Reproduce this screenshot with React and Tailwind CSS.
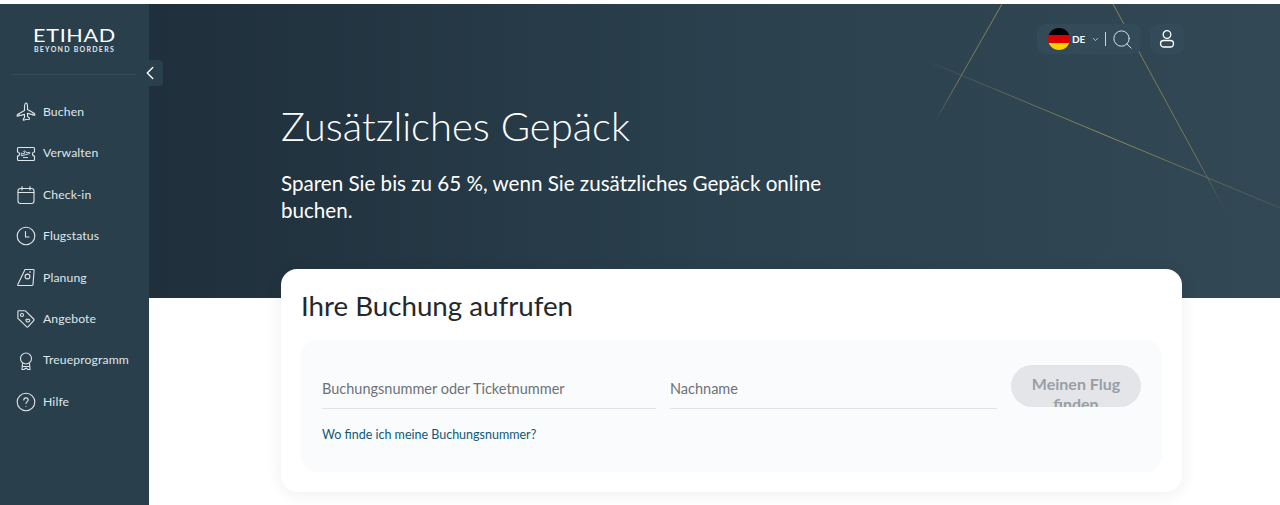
import { ChevronDown, ChevronLeft, Search } from 'lucide-react'

const font = { fontFamily: 'Lato, "Noto Sans", sans-serif' }

const PlaneIcon = () => (
  <svg width="20" height="20" viewBox="0 0 20 20" fill="none" stroke="currentColor" strokeWidth="1.1" strokeLinejoin="round">
    <path d="M10 1c1 0 1.500 2 1.500 3.500v3l6.600 3.700c.5.300.7.700.7 1.100v1l-7.300-1.900v3l1.900 1.600v1.300L10 17.500l-2.700.8V17l1.200-1.600v-3l-7.300 1.900v-1c0-.4.2-.8.700-1.100l6.600-3.700v-3C8.500 3 9 1 10 1z" />
    <path d="M3 11.500v2M17 11.500v2" />
  </svg>
)

const TicketIcon = () => (
  <svg width="20" height="20" viewBox="0 0 20 20" fill="none" stroke="currentColor" strokeWidth="1.1" strokeLinejoin="round">
    <path d="M2.500 3.500h15c.6 0 1 .4 1 1V8a2 2 0 0 0 0 4v3.500c0 .6-.4 1-1 1h-15c-.6 0-1-.4-1-1V12a2 2 0 0 0 0-4V4.500c0-.6.4-1 1-1z" />
    <path d="M5.500 11.800l8-2.200c1-.3.800-1.300-.2-1.200l-2.300.4L8.500 6.900l-.8.3 1.100 2-2 .6-1-.7-.6.2zM7 13.500h5" strokeWidth="0.9" />
  </svg>
)

const CalendarIcon = () => (
  <svg width="20" height="20" viewBox="0 0 20 20" fill="none" stroke="currentColor" strokeWidth="1.1" strokeLinecap="round">
    <rect x="2" y="3.500" width="16" height="15" rx="2.500" />
    <path d="M2 7.500h16M6 1.500v3.500M14 1.500v3.500" />
  </svg>
)

const ClockIcon = () => (
  <svg width="20" height="20" viewBox="0 0 20 20" fill="none" stroke="currentColor" strokeWidth="1.1" strokeLinecap="round" strokeLinejoin="round">
    <circle cx="10" cy="10" r="8.800" />
    <path d="M9.500 5.500V11h3.500" />
  </svg>
)

const TagIcon = () => (
  <svg width="20" height="20" viewBox="0 0 20 20" fill="none" stroke="currentColor" strokeWidth="1.1" strokeLinejoin="round">
    <path d="M9 1.500h8.300c.5 0 .8.300.8.800l-1.100 14.300c0 .5-.4.900-.9.900H2.300c-.5 0-.8-.5-.5-1z" />
    <circle cx="11.500" cy="8.500" r="2.400" />
    <path d="M13 4h2" />
  </svg>
)

const OfferIcon = () => (
  <svg width="20" height="20" viewBox="0 0 20 20" fill="none" stroke="currentColor" strokeWidth="1.1" strokeLinejoin="round">
    <path d="M2.500 1.800h6.200c.4 0 .7.100 1 .4l8 7.800c.5.500.5 1.200 0 1.700l-5.500 6c-.5.500-1.200.5-1.700 0l-8-7.800c-.3-.3-.6-.6-.6-1V2.700c0-.5.200-.9.600-.9z" />
    <circle cx="6" cy="6" r="1.500" />
    <path d="M11 13c-1.300-1-1.400-2.200-.6-2.700.5-.3 1.100-.1 1.400.4.300-.5 1-.7 1.500-.3.700.5.600 1.700-.6 2.500z" />
  </svg>
)

const AwardIcon = () => (
  <svg width="20" height="20" viewBox="0 0 20 20" fill="none" stroke="currentColor" strokeWidth="1.1" strokeLinecap="round" strokeLinejoin="round">
    <circle cx="10" cy="7.500" r="5.500" />
    <path d="M6.500 12.500l-.5 6h2l2-1.500 2 1.500h2l-.5-6M6.200 15.500h7.600" />
  </svg>
)

const HelpIcon = () => (
  <svg width="20" height="20" viewBox="0 0 20 20" fill="none" stroke="currentColor" strokeWidth="1.1" strokeLinecap="round">
    <circle cx="10" cy="10" r="8.800" />
    <path d="M7.800 8c0-1.300 1-2.100 2.200-2.100s2.200.8 2.200 2c0 1.700-2.200 1.800-2.200 3.600M10 14.200v.1" />
  </svg>
)

const UserIcon = () => (
  <svg width="18" height="20" viewBox="0 0 18 20" fill="none" stroke="currentColor" strokeWidth="1.300">
    <circle cx="9" cy="5.500" r="3.800" />
    <path d="M5.500 11.500h7c2 0 3 1.400 3 3s-1 3.500-3 3.500h-7c-2 0-3-1.900-3-3.500s1-3 3-3z" />
  </svg>
)

const navItems = [
  { label: 'Buchen', Icon: PlaneIcon },
  { label: 'Verwalten', Icon: TicketIcon },
  { label: 'Check-in', Icon: CalendarIcon },
  { label: 'Flugstatus', Icon: ClockIcon },
  { label: 'Planung', Icon: TagIcon },
  { label: 'Angebote', Icon: OfferIcon },
  { label: 'Treueprogramm', Icon: AwardIcon },
  { label: 'Hilfe', Icon: HelpIcon },
]

function Sidebar() {
  return (
    <aside className="relative z-20 flex w-[149px] shrink-0 flex-col bg-[#2a3f4c] text-[#dfe6ea]">
      <div className="mx-3 flex h-[71px] flex-col items-center border-b border-[#364c59] pt-[22px]">
        <span className="scale-x-120 text-[18px] leading-[18px] tracking-[0.03em] text-white">ETIHAD</span>
        <span className="mt-[1px] text-[7px] leading-[9px] font-bold tracking-[0.18em] text-[#dfe6ea]">BEYOND BORDERS</span>
      </div>
      <button className="absolute top-[56px] left-[136px] flex h-[26px] w-[27px] items-center justify-center rounded bg-[#2a3f4c] text-white">
        <ChevronLeft size={22} strokeWidth={1.5} />
      </button>
      <nav className="mt-[16.5px] flex flex-col">
        {navItems.map(({ label, Icon }) => (
          <a key={label} className="flex h-[41.4px] items-center gap-[7px] pl-[16px] text-[12.2px] tracking-[0.01em]">
            <Icon />
            <span>{label}</span>
          </a>
        ))}
      </nav>
    </aside>
  )
}

function Hero() {
  return (
    <section className="relative h-[294px] overflow-hidden bg-gradient-to-r from-[#1f2f3b] via-[#2a404d] to-[#324854] pt-[97px] pl-[132px] text-white">
      <svg className="absolute inset-0 h-full w-full" fill="none" strokeWidth="1">
        <defs>
          <linearGradient id="lineA" x1="0" y1="0" x2="1" y2="0">
            <stop offset="0" stopColor="#8f8a5c" stopOpacity="0.1" />
            <stop offset="0.5" stopColor="#8f8a5c" stopOpacity="1" />
            <stop offset="1" stopColor="#8f8a5c" stopOpacity="0.2" />
          </linearGradient>
          <linearGradient id="lineB" x1="0" y1="0" x2="0" y2="1">
            <stop offset="0" stopColor="#8f8a5c" stopOpacity="0.9" />
            <stop offset="0.75" stopColor="#8f8a5c" stopOpacity="0.7" />
            <stop offset="1" stopColor="#8f8a5c" stopOpacity="0.05" />
          </linearGradient>
        </defs>
        <path d="M853 0 787 116" stroke="url(#lineB)" />
        <path d="M964 0 1076 206" stroke="url(#lineB)" />
        <path d="M783 59 1131 204" stroke="url(#lineA)" />
      </svg>
      <div className="absolute top-[20px] left-[888px] flex h-[30px] w-[104px] items-center rounded-lg bg-[#334b59] pl-[11px] text-[#dfe6ea]">
        <span className="h-[22px] w-[22px] overflow-hidden rounded-full">
          <span className="block h-[7px] bg-black" />
          <span className="block h-[8px] bg-[#dd0000]" />
          <span className="block h-[7px] bg-[#ffce00]" />
        </span>
        <span className="ml-[2px] text-[10px] font-bold text-white">DE</span>
        <ChevronDown className="ml-[6px]" size={9} />
        <span className="ml-[5px] h-[14px] w-px bg-[#c9d3d9]" />
        <Search className="ml-[5px]" size={23} strokeWidth={1} />
      </div>
      <div className="absolute top-[20px] left-[1001px] flex h-[30px] w-[34px] items-center justify-center rounded-lg bg-[#334b59] text-white">
        <UserIcon />
      </div>
      <div className="relative">
        <h1 className="text-[40px] leading-[50px] font-light">Zusätzliches Gepäck</h1>
        <p className="mt-[19px] w-[560px] text-[20.6px] leading-[27px]">
          Sparen Sie bis zu 65 %, wenn Sie zusätzliches Gepäck online buchen.
        </p>
      </div>
    </section>
  )
}

function BookingCard() {
  return (
    <section className="relative z-10 -mt-[29px] ml-[132px] h-[223px] w-[901px] rounded-2xl bg-white px-5 pt-[18px] shadow-[0_2px_16px_rgba(30,40,50,0.08)]">
      <h2 className="text-[27.7px] leading-[38px] text-[#22282e]">Ihre Buchung aufrufen</h2>
      <div className="mt-[15px] h-[132px] rounded-2xl bg-[#fafbfd] px-[21px] pt-[25px]">
        <div className="flex items-start">
          <div className="flex h-[44px] w-[334px] items-center border-b border-[#dfe3e6] pt-[4px] text-[14.5px] text-[#6d7278]">
            Buchungsnummer oder Ticketnummer
          </div>
          <div className="ml-[14px] flex h-[44px] w-[327px] items-center border-b border-[#dfe3e6] pt-[4px] text-[14.5px] text-[#6d7278]">
            Nachname
          </div>
          <button className="ml-[14px] h-[42px] w-[130px] overflow-hidden rounded-[21px] bg-[#e3e5e8] px-4 pt-[9px] text-[16px] leading-[20px] font-bold text-[#9a9ea6]">
            Meinen Flug finden
          </button>
        </div>
        <a className="mt-[17px] block text-[12.5px] leading-[18px] text-[#0e5a75]">Wo finde ich meine Buchungsnummer?</a>
      </div>
    </section>
  )
}

export default function App() {
  return (
    <div className="flex h-[505px] overflow-hidden bg-white pt-1" style={font}>
      <Sidebar />
      <main className="min-w-0 flex-1">
        <Hero />
        <BookingCard />
      </main>
    </div>
  )
}
